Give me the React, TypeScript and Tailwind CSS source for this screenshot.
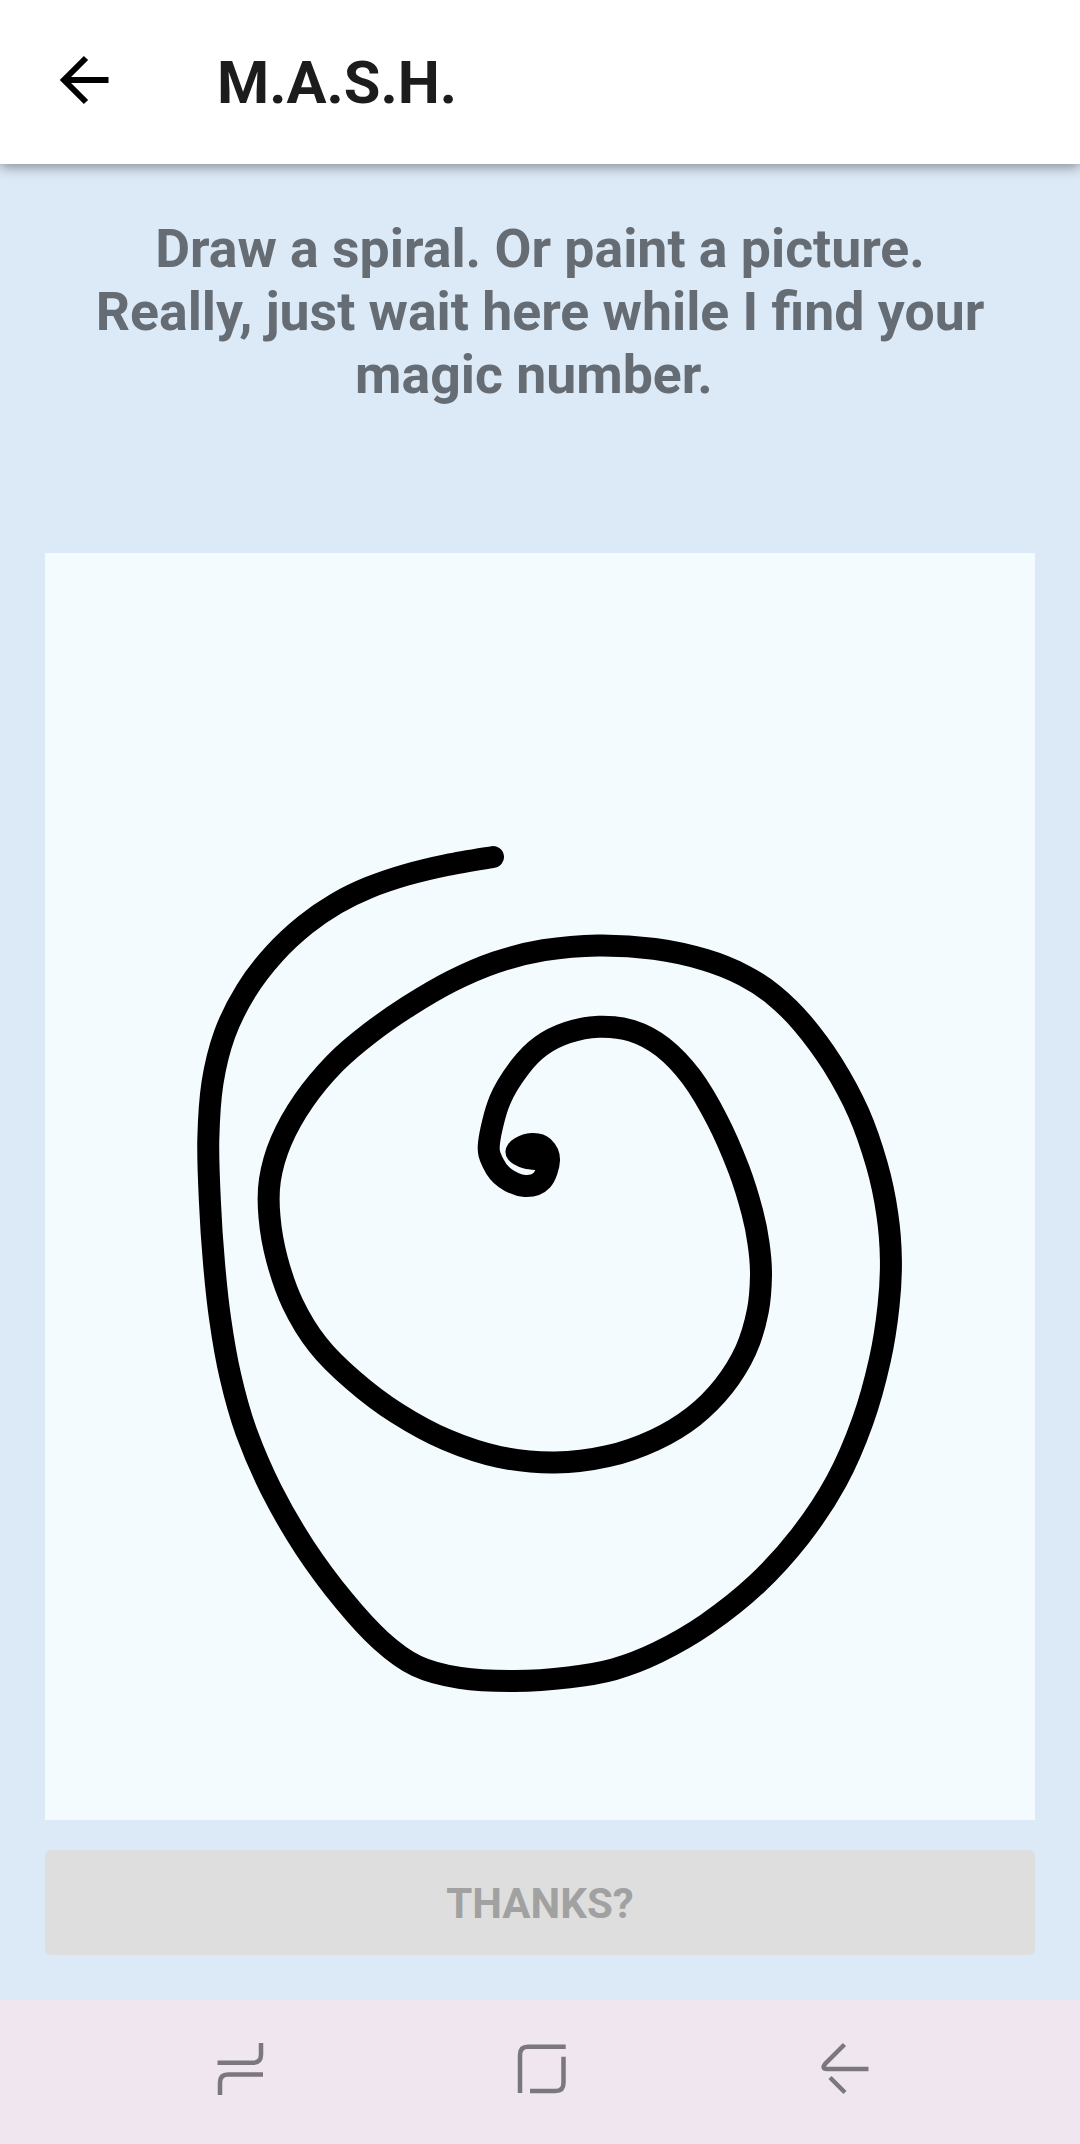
const spiral: [number, number][] = [
  [493, 857], [447, 865], [407, 875], [367, 888], [337, 903], [307, 925], [273, 953], [247, 990],
  [223, 1037], [213, 1080], [208, 1140], [210, 1200], [215, 1267], [220, 1317], [230, 1377], [247, 1433],
  [270, 1487], [303, 1547], [347, 1603], [380, 1640], [420, 1667], [453, 1677], [513, 1682], [580, 1675],
  [607, 1670], [657, 1653], [707, 1625], [757, 1583], [800, 1537], [837, 1480], [863, 1423], [880, 1360],
  [888, 1300], [891, 1267], [887, 1210], [877, 1167], [859, 1113], [833, 1063], [802, 1023], [770, 993],
  [747, 978], [707, 960], [653, 948], [600, 945], [540, 951], [497, 962], [453, 980], [407, 1008],
  [370, 1033], [337, 1062], [303, 1100], [280, 1140], [270, 1187], [270, 1210], [277, 1260], [293, 1307],
  [317, 1343], [353, 1380], [397, 1413], [447, 1440], [497, 1457], [557, 1463], [607, 1457], [657, 1438],
  [693, 1417], [723, 1387], [747, 1350], [758, 1310], [761, 1277], [757, 1237], [753, 1220], [740, 1170],
  [717, 1117], [690, 1077], [663, 1047], [633, 1030], [598, 1027], [567, 1033], [540, 1047], [520, 1067],
  [500, 1100], [489, 1143], [493, 1163], [505, 1178], [525, 1186], [542, 1180], [549, 1160], [543, 1147],
  [532, 1144], [520, 1148], [517, 1153], [527, 1158], [538, 1159],
];

// points near the centre stay as read, the long arcs get evened out
const KEEP_TAIL = 14;

function evenOut(pts: [number, number][]) {
  const w = [-3, 12, 17, 12, -3];
  return pts.map((p, i) => {
    if (i < 2 || i >= pts.length - KEEP_TAIL) return p;
    const avg = (k: 0 | 1) => w.reduce((sum, v, j) => sum + v * pts[i + j - 2][k], 0) / 35;
    return [avg(0), avg(1)] as [number, number];
  });
}

// smooth the hand-read points with a catmull-rom curve
function smoothPath(pts: [number, number][]) {
  let d = `M${pts[0][0]} ${pts[0][1]}`;
  for (let i = 0; i < pts.length - 1; i++) {
    const p0 = pts[Math.max(i - 1, 0)];
    const p1 = pts[i];
    const p2 = pts[i + 1];
    const p3 = pts[Math.min(i + 2, pts.length - 1)];
    const c1x = p1[0] + (p2[0] - p0[0]) / 6;
    const c1y = p1[1] + (p2[1] - p0[1]) / 6;
    const c2x = p2[0] - (p3[0] - p1[0]) / 6;
    const c2y = p2[1] - (p3[1] - p1[1]) / 6;
    d += `C${c1x.toFixed(1)} ${c1y.toFixed(1)} ${c2x.toFixed(1)} ${c2y.toFixed(1)} ${p2[0].toFixed(1)} ${p2[1].toFixed(1)}`;
  }
  return d;
}

const App = () => {
  return (
    <div className="w-[1080px] h-[2144px] flex flex-col bg-[#dce9f6] overflow-hidden font-['Roboto',sans-serif]">
      {/* App bar */}
      <header className="relative z-10 h-[164px] shrink-0 bg-white flex items-center shadow-[0_3px_12px_rgba(0,0,0,0.4)]">
        <svg width="72" height="72" viewBox="0 0 72 72" className="ml-[48px] mb-[4px]" fill="none" stroke="#000" strokeWidth="6">
          <path d="M60.500 36H17" />
          <path d="M38 14L16 36L38 58" />
        </svg>
        <h1 className="ml-[97px] mt-[3px] text-[59.6px] leading-none font-bold text-[#1c1c1c]">M.A.S.H.</h1>
      </header>

      {/* Message and drawing area */}
      <main className="flex-1 flex flex-col px-[45px]">
        <p className="mt-[53px] h-[336px] text-center text-[53.6px] leading-[63px] font-bold text-[#656c74] whitespace-nowrap">
          Draw a spiral. Or paint a picture.
          <br />
          Really, just wait here while I find your
          <br />
          <span className="pr-[12px]">magic number.</span>
        </p>
        <div className="h-[1267px] bg-[#f4fbff]">
          <svg width="990" height="1267" viewBox="45 553 990 1267" fill="none">
            <path d={smoothPath(evenOut(evenOut(spiral)))} stroke="#000" strokeWidth="22" strokeLinecap="round" strokeLinejoin="round" />
          </svg>
        </div>
        <button className="mt-[30px] h-[105px] pt-[2px] rounded-[6px] bg-[#dedede] text-[42px] font-bold text-[#a1a1a1]">
          THANKS?
        </button>
      </main>

      {/* System navigation */}
      <nav className="h-[144px] shrink-0 bg-[#f0e6f0]">
        <svg width="1080" height="144" viewBox="0 2000 1080 144" fill="none" stroke="#7a787c" strokeWidth="4.500">
          <path d="M261 2043V2054.500Q261 2062.700 253 2062.700H217.500" />
          <path d="M263 2074.500H228Q220 2074.500 220 2082.500V2095" />
          <path d="M565.700 2046.700H528Q520 2046.700 520 2054.700V2093" />
          <path d="M563.500 2056.700V2083Q563.500 2091 555.500 2091H530" />
          <path d="M844.500 2044.500L825.500 2063.500Q821 2069 827 2069H868.500" />
          <path d="M830 2077.500L845 2092.500" />
        </svg>
      </nav>
    </div>
  );
};

export default App;
